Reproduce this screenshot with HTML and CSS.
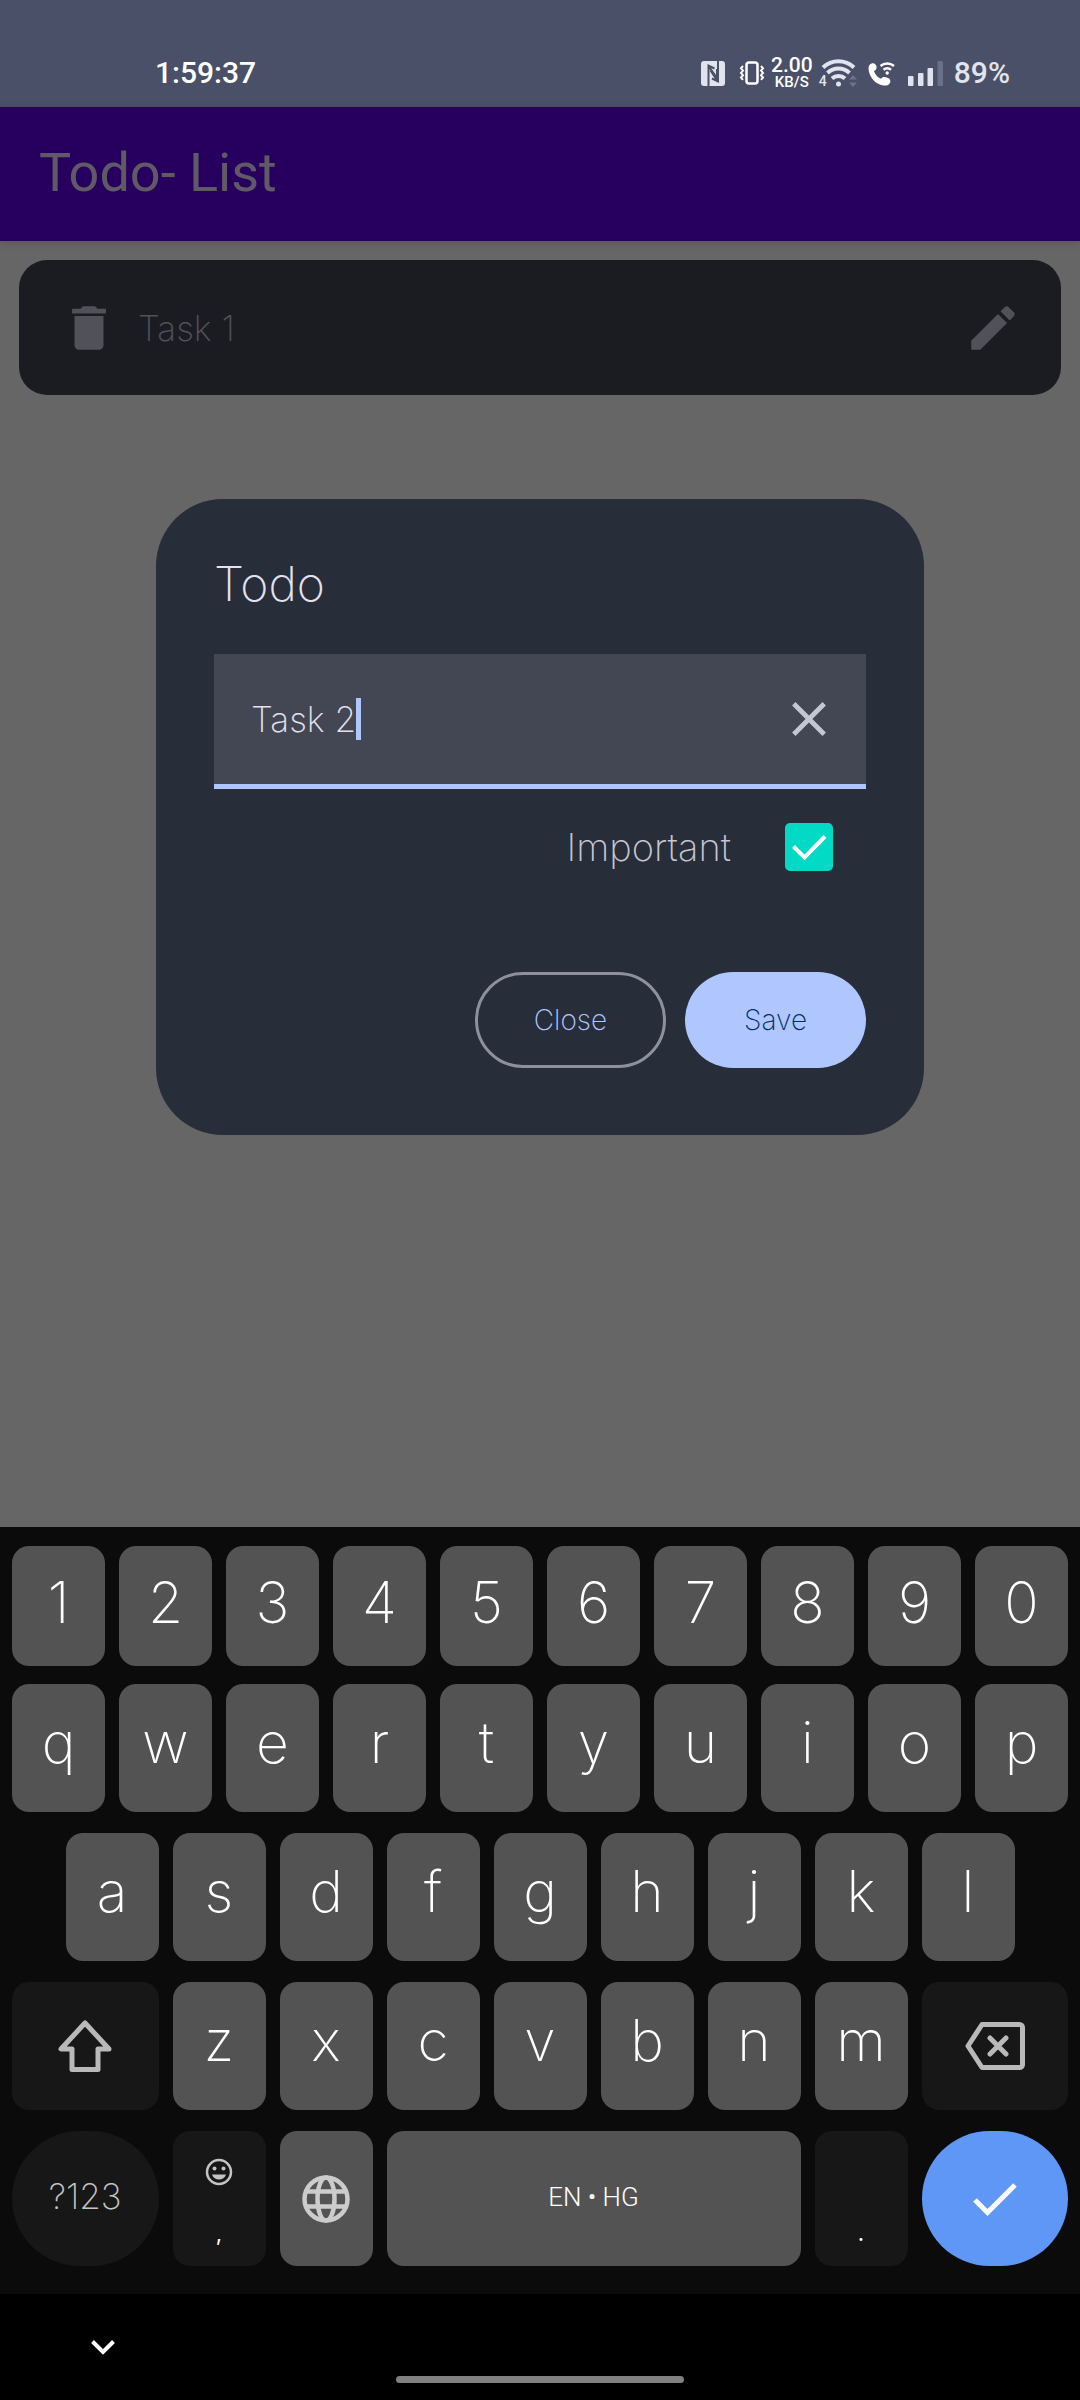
FILE: index.html
```html
<!DOCTYPE html>
<html lang="en">
<head>
<meta charset="utf-8">
<meta name="viewport" content="width=device-width, initial-scale=1">
<title>Todo- List</title>
<link rel="stylesheet" href="styles.css">
</head>
<body>
<header class="status">
  <time class="status-time">1:59:37</time>
  <div class="status-icons">
    <svg class="nfc" viewBox="0 0 24 25" width="24" height="25"><rect width="24" height="25" rx="3" fill="#e1e4ee"/><path d="M7.500 25V4.500l6 3M7.500 5l8.500 12V8M17 0v20.500l-6-3M16.500 20L9.500 9.500" fill="none" stroke="#495067" stroke-width="2"/></svg>
    <svg class="vibrate" viewBox="0 0 26 24" width="26" height="24" fill="none" stroke="#fff"><rect x="7.500" y="1.500" width="11" height="21" rx="2.500" stroke-width="2.500"/><path d="M4 5l-2 2.300 2 2.300-2 2.300 2 2.300-2 2.300 2 2.300M22 5l2 2.300-2 2.300 2 2.300-2 2.300 2 2.300-2 2.300" stroke-width="2"/></svg>
    <div class="speed"><span class="speed-value">2.00</span><span class="speed-unit">KB/S</span></div>
    <div class="wifi">
      <span class="wifi-band">4</span>
      <svg viewBox="0 0 36 28" width="36" height="28" fill="none" stroke="#e1e4ee" stroke-width="4"><path d="M2 8.500a22.500 22.500 0 0 1 31 0M6.500 14a16 16 0 0 1 22 0M11 19.500a9.500 9.500 0 0 1 13 0"/><circle cx="17.500" cy="25" r="2.500" fill="#e1e4ee" stroke="none"/><path d="M32 16l4 4.500h-8zM32 28l4-4.500h-8z" fill="#6d7388" stroke="none"/></svg>
    </div>
    <svg class="call" viewBox="0 0 27 25" width="27" height="25"><path d="M3.500 2.500C6 1.500 8 3 8.500 5.500c.4 2.200-.3 3.500-2.500 4.500 1 3.500 3.500 6.300 7 7.800 1.300-1.600 2.600-2 4.800-1.500 3 .7 5 2 4.500 4.700-.6 2.800-3.500 4-7 3.500C7.500 23.500.8 16 .5 7.500.5 5 1.500 3.200 3.500 2.500z" fill="#fff"/><path d="M12.500 5a10.500 10.500 0 0 1 13.500 0M15.500 8.800a6 6 0 0 1 7.500 0" fill="none" stroke="#fff" stroke-width="2.400"/><circle cx="19.200" cy="12" r="1.700" fill="#fff"/></svg>
    <svg class="signal" viewBox="0 0 36 25" width="36" height="25" fill="#e1e4ee"><rect y="15" width="5.500" height="10" rx="1"/><rect x="10" y="12" width="5.500" height="13" rx="1"/><rect x="19.500" y="7" width="5.500" height="18" rx="1"/><rect x="29.500" width="5.500" height="25" rx="1" fill="#697087"/></svg>
    <span class="battery">89%</span>
  </div>
</header>

<main class="screen">
  <div class="app-bar"><h1 class="app-title">Todo- List</h1></div>
  <ul class="tasks">
    <li class="task">
      <button class="icon-button" type="button" aria-label="Delete Task 1"><svg viewBox="0 0 24 24" width="58" height="58" fill="currentColor"><path d="M6 19c0 1.100.9 2 2 2h8c1.100 0 2-.9 2-2V7H6v12zM19 4h-3.500l-1-1h-5l-1 1H5v2h14V4z"/></svg></button>
      <span class="task-name">Task 1</span>
      <button class="icon-button" type="button" aria-label="Edit Task 1"><svg viewBox="0 0 24 24" width="58" height="58" fill="currentColor"><path d="M3 17.250V21h3.750L17.810 9.940l-3.750-3.750L3 17.250zM20.710 7.040c.39-.39.39-1.020 0-1.410l-2.340-2.340c-.39-.39-1.020-.39-1.410 0l-1.830 1.830 3.750 3.750 1.830-1.830z"/></svg></button>
    </li>
  </ul>

  <div class="overlay">
    <form class="dialog" role="dialog" aria-labelledby="dialog-title">
      <h2 class="dialog-title" id="dialog-title">Todo</h2>
      <div class="field">
        <input class="field-input" type="text" value="Task 2" size="6" aria-labelledby="dialog-title">
        <span class="caret"></span>
        <button class="icon-button clear" type="button" aria-label="Clear"><svg viewBox="0 0 24 24" width="58" height="58" fill="currentColor"><path d="M19 6.410L17.590 5 12 10.590 6.410 5 5 6.410 10.590 12 5 17.590 6.410 19 12 13.410 17.590 19 19 17.590 13.410 12z"/></svg></button>
      </div>
      <div class="important">
        <label for="important">Important</label>
        <span class="check"><input class="check-box" type="checkbox" id="important" checked><svg class="check-mark" viewBox="0 0 48 48" width="48" height="48" fill="none" stroke="#fff" stroke-width="4"><path d="M8.500 23.500l11 11L40 13.500"/></svg></span>
      </div>
      <div class="actions">
        <button class="pill outlined" type="button">Close</button>
        <button class="pill filled" type="submit">Save</button>
      </div>
    </form>
  </div>
</main>

<section class="keyboard" aria-label="Keyboard">
  <div class="keys digits">
    <button class="key">1</button><button class="key">2</button><button class="key">3</button><button class="key">4</button><button class="key">5</button><button class="key">6</button><button class="key">7</button><button class="key">8</button><button class="key">9</button><button class="key">0</button>
  </div>
  <div class="keys">
    <button class="key">q</button><button class="key">w</button><button class="key">e</button><button class="key">r</button><button class="key">t</button><button class="key">y</button><button class="key">u</button><button class="key">i</button><button class="key">o</button><button class="key">p</button>
  </div>
  <div class="keys inset">
    <button class="key">a</button><button class="key">s</button><button class="key">d</button><button class="key">f</button><button class="key">g</button><button class="key">h</button><button class="key">j</button><button class="key">k</button><button class="key">l</button>
  </div>
  <div class="keys">
    <button class="key dark wide glyph" aria-label="Shift"><svg viewBox="0 0 54 54" width="54" height="54" fill="none" stroke="#b9b9b9" stroke-width="5" stroke-linejoin="round"><path d="M27 4L3 30h11v20.500h26V30h11z"/></svg></button>
    <button class="key">z</button><button class="key">x</button><button class="key">c</button><button class="key">v</button><button class="key">b</button><button class="key">n</button><button class="key">m</button>
    <button class="key dark wide glyph" aria-label="Backspace"><svg viewBox="0 0 60 48" width="60" height="48" fill="none" stroke="#b9b9b9" stroke-width="5" stroke-linejoin="round" stroke-linecap="round"><path d="M17 2.500h37.500a3 3 0 0 1 3 3v37a3 3 0 0 1-3 3H17L3 24zM25 16l16 16M41 16L25 32"/></svg></button>
  </div>
  <div class="keys bottom">
    <button class="key dark wide round symbols">?123</button>
    <button class="key dark stacked"><svg viewBox="0 0 28 28" width="28" height="28"><circle cx="14" cy="14" r="12" fill="none" stroke="#c4c4c4" stroke-width="2.500"/><g fill="#c4c4c4"><circle cx="9.500" cy="10.500" r="2"/><circle cx="18.500" cy="10.500" r="2"/><path d="M7 16.500h14c-1 3.500-3.800 5-7 5s-6-1.500-7-5z"/></g></svg><span>,</span></button>
    <button class="key glyph" aria-label="Language"><svg viewBox="0 0 48 48" width="48" height="48" fill="none" stroke="#ccc" stroke-width="4.500"><circle cx="24" cy="24" r="21.500"/><ellipse cx="24" cy="24" rx="8.500" ry="21.500"/><path d="M4 16.500h40M4 31.500h40"/></svg></button>
    <button class="key space">EN • HG</button>
    <button class="key dark stacked"><span>.</span></button>
    <button class="key wide round enter glyph" aria-label="Done"><svg viewBox="0 0 44 34" width="44" height="34" fill="none" stroke="#fff" stroke-width="5"><path d="M2 18l12.500 12.500L42 3"/></svg></button>
  </div>
</section>

<nav class="nav">
  <button class="nav-hide" type="button" aria-label="Hide keyboard"><svg viewBox="0 0 46 46" width="46" height="46" fill="none" stroke="#fff" stroke-width="4"><path d="M12.500 17.500L23 28l10.500-10.500"/></svg></button>
  <div class="nav-bar"></div>
</nav>
</body>
</html>
```
FILE: styles.css
```css
* { box-sizing: border-box; }

body {
  margin: 0;
  min-height: 100vh;
  display: flex;
  flex-direction: column;
  background: #000;
  font-family: Inter, "Liberation Sans", sans-serif;
  font-weight: 200;
}

h1, h2, ul { margin: 0; padding: 0; }
svg { display: block; }

button, input {
  margin: 0;
  padding: 0;
  border: 0;
  background: none;
  color: inherit;
  font: inherit;
}

/* Status bar */
.status {
  display: flex;
  justify-content: space-between;
  align-items: flex-end;
  height: 107px;
  padding: 0 70px 16px 155px;
  background: #495067;
  color: #fff;
  font: 500 30px/36px Roboto, sans-serif;
}
.status-icons { display: flex; align-items: center; }
.vibrate { margin-left: 14px; }
.speed {
  display: flex;
  flex-direction: column;
  align-items: center;
  width: 42px;
  margin-left: 6px;
}
.speed-value { font-size: 21px; line-height: 18px; }
.speed-unit { font-size: 15px; line-height: 16px; }
.wifi { display: flex; align-items: flex-end; margin-left: 6px; }
.wifi-band { width: 6px; margin-right: -6px; font-size: 14px; line-height: 12px; color: #e1e4ee; }
.wifi svg { margin-left: 2px; }
.call { margin-left: 11px; }
.signal { margin-left: 13px; }
.battery { margin-left: 10px; color: #e1e4ee; }

/* Todo screen */
.screen {
  position: relative;
  flex: 1;
  background: #666;
}
.app-bar {
  display: flex;
  align-items: center;
  height: 134px;
  padding: 0 39px 2px;
  background: #27005f;
  box-shadow: 0 2px 8px rgba(0, 0, 0, 0.15);
}
.app-title { font: 400 54px/64px Roboto, sans-serif; color: #5f5a66; }
.tasks { padding: 19px; list-style: none; }
.task {
  display: flex;
  align-items: center;
  gap: 20px;
  height: 135px;
  padding: 0 39px 0 41px;
  border-radius: 28px;
  background: #1b1c21;
  color: #505159;
}
.task-name { flex: 1; font-size: 35px; }

/* Dialog */
.overlay {
  position: absolute;
  inset: 0;
  display: grid;
  place-items: center;
}
.dialog {
  width: 768px;
  max-width: 100%;
  padding: 56px 58px 67px;
  border-radius: 67px;
  background: #282d3a;
  color: #e2e2ec;
}
.dialog-title { font-size: 48px; font-weight: 200; line-height: 58px; }
.field {
  display: flex;
  align-items: center;
  height: 135px;
  margin-top: 41px;
  padding: 0 28px 0 37px;
  border-bottom: 5px solid #b0c6ff;
  background: #434653;
}
.field-input { field-sizing: content; outline: none; font-size: 35px; line-height: 44px; }
.caret { width: 5px; height: 42px; background: #b0c6ff; }
.clear { margin-left: auto; color: #c5c6d4; }
.important {
  display: flex;
  justify-content: flex-end;
  align-items: center;
  gap: 54px;
  height: 116px;
  padding-right: 33px;
  font-size: 38px;
  color: #c5c6d0;
}
.check { display: grid; }
.check-box, .check-mark { grid-area: 1 / 1; }
.check-box {
  appearance: none;
  width: 48px;
  height: 48px;
  border-radius: 5px;
}
.check-box:checked { background: #03dac5; }
.check-mark { pointer-events: none; }
.actions {
  display: flex;
  justify-content: flex-end;
  gap: 19px;
  margin-top: 67px;
}
.pill {
  height: 96px;
  padding: 0 59px;
  border-radius: 48px;
  font-size: 28px;
}
.outlined { border: 3px solid #8e909d; padding: 0 56px; color: #b0c6ff; }
.filled { background: #b0c6ff; color: #002d6f; }

/* Keyboard */
.keyboard {
  display: flex;
  flex-direction: column;
  gap: 21px;
  padding: 19px 12px 28px;
  background: #0b0b0b;
  color: #fff;
}
.keys {
  display: grid;
  grid-template-columns: repeat(20, minmax(0, 1fr));
  column-gap: 14px;
  height: 128px;
}
.digits { height: 120px; margin-bottom: -3px; }
.bottom { height: 135px; }
.key {
  grid-column: span 2;
  display: flex;
  align-items: center;
  justify-content: center;
  padding-bottom: 12px;
  border-radius: 17px;
  background: #535353;
  font-size: 57px;
  font-weight: 250;
}
.digits .key { padding-bottom: 7px; }
.inset .key:first-child { grid-column: 2 / span 2; }
.wide { grid-column: span 3; }
.dark { background: #171717; }
.round { border-radius: 68px; }
.glyph { padding: 0; }
.symbols { padding-bottom: 6px; font-size: 35px; font-weight: 200; color: #c4c4c4; }
.stacked {
  flex-direction: column;
  justify-content: space-between;
  padding: 27px 0 19px;
  font-size: 22px;
  font-weight: 400;
  line-height: 28px;
}
.stacked span { margin-top: auto; }
.space {
  grid-column: span 8;
  padding: 0 0 3px;
  font: 300 26px Roboto, sans-serif;
}
.enter { background: #5f97f6; }

/* System navigation */
.nav {
  display: flex;
  flex-direction: column;
  gap: 6px;
  padding: 30px 80px 17px;
}
.nav-hide { align-self: flex-start; }
.nav-bar {
  align-self: center;
  width: 288px;
  height: 7px;
  border-radius: 4px;
  background: #808080;
}
```
